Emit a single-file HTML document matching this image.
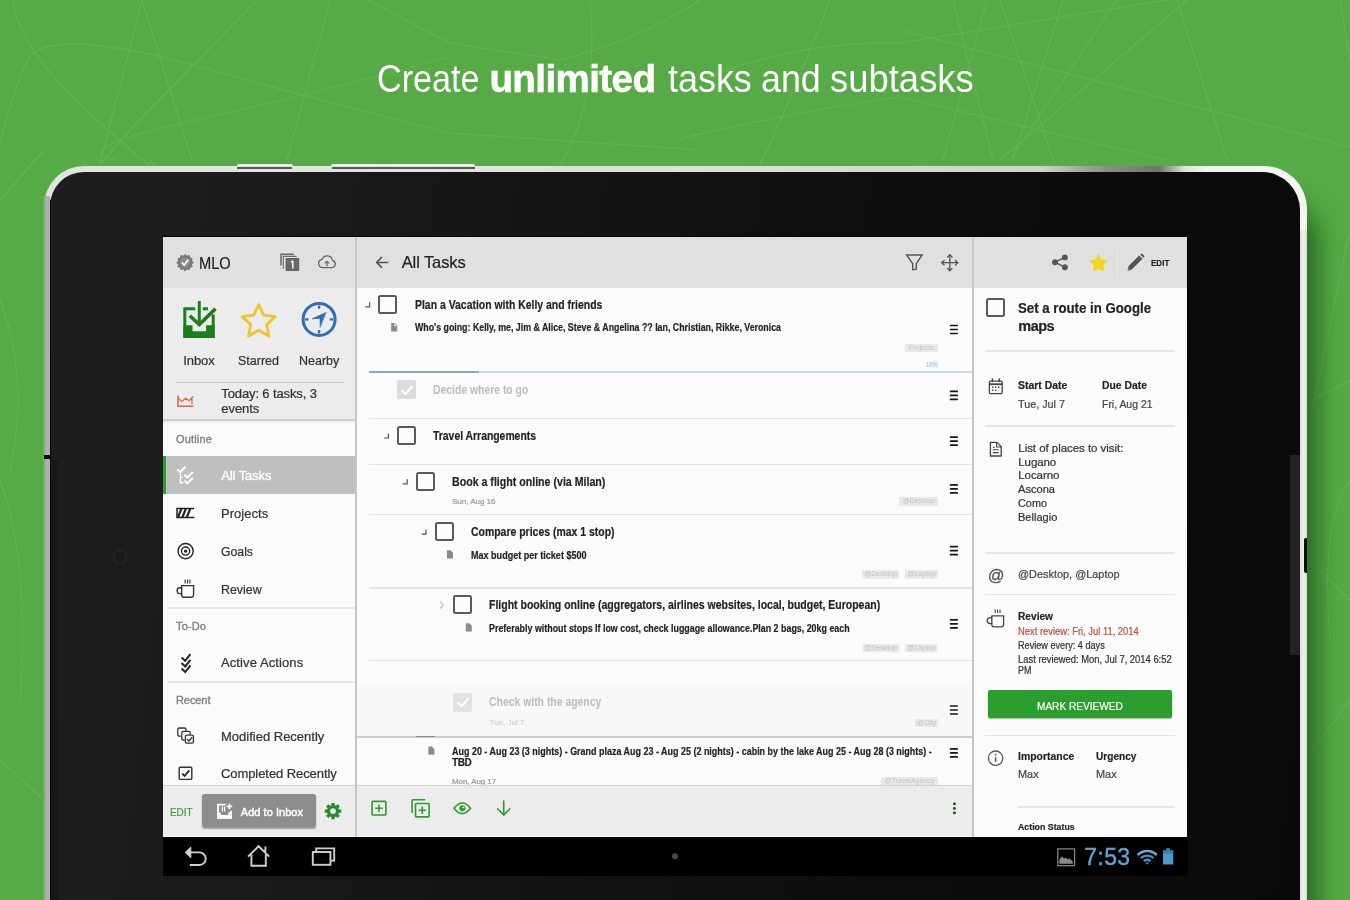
<!DOCTYPE html>
<html><head><meta charset="utf-8"><title>MLO</title>
<style>
*{box-sizing:border-box;margin:0;padding:0}
html,body{width:1350px;height:900px;overflow:hidden}
body{background:#56ab46;font-family:"Liberation Sans",sans-serif;position:relative;color:#222}
.t{position:absolute;white-space:pre;display:block;transform:translateZ(0)}
.b{position:absolute;display:block}
svg{position:absolute;overflow:visible}
#bgl{left:0;top:0;width:1350px;height:900px}
.cb{position:absolute;width:19px;height:19px;border:2px solid #5a5a5a;border-radius:2.5px;background:#fcfcfc}
.cbd{position:absolute;width:19px;height:19px;border-radius:2px;background:#dcdcdc}
.hd{position:absolute;height:1.6px;background:#e5e5e5}
.tag{position:absolute;height:8.4px;background:#e9e9e9;color:#c2c2c2;font-size:7px;line-height:8.4px;text-align:center;white-space:pre;overflow:hidden;filter:blur(.35px)}
</style></head><body>
<svg id="bgl" viewBox="0 0 1350 900" fill="none" stroke="#fff" stroke-opacity=".09" stroke-width="1.2">
<path d="M142 0L100 163M142 0L192 160M330 0L287 160M257 0L127 133L100 165M13 0Q18 50 100 123T150 160M0 143Q20 67 33 53Q67 30 200 67T450 133L700 150M450 57Q300 97 183 123T117 160M367 0L450 43L560 60M0 200L44 150M1177 0L1227 160M1187 0L1000 160M1117 0L1010 160M1063 0L1013 160M1000 0L1053 160M953 0L993 160M900 30L1350 147M900 43L1167 0M900 97L1167 160M987 0L943 160M700 80Q800 40 900 43M675 140Q800 110 900 97M560 60Q640 40 700 0M590 0Q600 100 560 165M760 165Q800 80 830 0M0 480Q30 560 20 700M0 760L44 800M1350 230L1310 420M1310 560L1350 600M1350 380L1312 400M1312 750L1350 700M0 300Q30 380 10 470M1350 480Q1320 520 1330 640M1340 0L1350 60"/>
</svg>

<!-- tablet frame -->
<div class="b" style="left:236.5px;top:164.3px;width:56px;height:3px;background:#f4f5f2;border-radius:2px 2px 0 0"></div>
<div class="b" style="left:331px;top:164.3px;width:144px;height:3px;background:#f4f5f2;border-radius:2px 2px 0 0"></div>
<div class="b" style="left:800px;top:190px;width:504px;height:800px;border-radius:0 43px 0 0;box-shadow:14px 10px 26px rgba(10,55,5,.6)"></div>
<div class="b" id="fo" style="left:44px;top:165.5px;width:1263px;height:800px;border-radius:40px 43px 0 0;background:linear-gradient(90deg,#e2e4e0 0,#dfe1dd 50%,#d0d2ce 79%,#8e8f8d 84%,#727371 88.3%,#dfe0dd 90.3%,#f2f3f0 92%,#f4f5f2 100%)"></div>
<div class="b" style="left:43px;top:196px;width:7.300px;height:740px;background:linear-gradient(90deg,#56ab46 0,#7fb276 18%,#a9aea8 40%,#b2b2b2 60%,#adadad 100%)"></div>
<div class="b" style="left:1299px;top:230px;width:8px;height:700px;background:linear-gradient(90deg,#d9dad6,#f0f1ee 60%,#d8d9d5)"></div>
<div class="b" style="left:237px;top:166.600px;width:55px;height:2.200px;background:rgba(55,55,55,.8)"></div>
<div class="b" style="left:331.5px;top:166.600px;width:143px;height:2.200px;background:rgba(55,55,55,.8)"></div>
<div class="b" id="fi" style="left:50px;top:171.5px;width:1250px;height:800px;border-radius:34px 38px 0 0;background:linear-gradient(97deg,#1e1e1e 0,#1c1c1c 14%,#151515 36%,#0f0f0f 58%,#0b0b0b 85%,#0a0a0a 100%)"></div>
<div class="b" style="left:50px;top:200px;width:1.200px;height:740px;background:#080808"></div>
<div class="b" style="left:43.800px;top:455px;width:6.5px;height:4.200px;background:#0a0a0a"></div>
<div class="b" style="left:50px;top:460px;width:8px;height:470px;background:rgba(0,0,0,.18)"></div>
<div class="b" style="left:1290px;top:455px;width:9.5px;height:200px;background:#222"></div>
<div class="b" style="left:1303.5px;top:538px;width:3.5px;height:35px;background:#0a0a0a;border-radius:2px 0 0 2px"></div>
<div class="b" style="left:112px;top:548.5px;width:16px;height:16px;border-radius:50%;border:3px solid #222;background:#1a1a1a"></div>

<!-- screen -->
<div class="b" style="left:162.5px;top:235.5px;width:1025px;height:640px;background:#000"></div>
<div class="b" style="left:163px;top:237px;width:1024px;height:600px;background:#fbfbfb"></div>
<!-- headers -->
<div class="b" style="left:163px;top:237px;width:1024px;height:51px;background:#e0e0e0"></div>
<!-- left panel -->
<div class="b" style="left:163px;top:288px;width:192px;height:132px;background:#ececec"></div>
<div class="b" style="left:163px;top:419.3px;width:192px;height:2px;background:#cfcfcf"></div>
<div class="b" style="left:163px;top:421.3px;width:192px;height:2px;background:linear-gradient(#e6e6e6,#fbfbfb)"></div>
<div class="b" style="left:176px;top:381.5px;width:168px;height:1.5px;background:#c6c6c6"></div>
<div class="b" style="left:163px;top:456px;width:192px;height:37.6px;background:#bfbfbf"></div>
<div class="b" style="left:163px;top:456px;width:3.4px;height:37.6px;background:#2e9b2e"></div>
<div class="b" style="left:168px;top:606.8px;width:187px;height:2px;background:#e6e6e6"></div>
<div class="b" style="left:168px;top:680.8px;width:187px;height:2px;background:#e6e6e6"></div>
<!-- middle rows -->
<div class="b" style="left:368.5px;top:371.3px;width:603px;height:1.6px;background:#c9dbe6"></div>
<div class="b" style="left:368.5px;top:371.3px;width:110px;height:1.6px;background:#86aac2"></div>
<div class="hd" style="left:368.5px;top:417.6px;width:603px"></div>
<div class="hd" style="left:368.5px;top:463.6px;width:603px"></div>
<div class="hd" style="left:368.5px;top:513.7px;width:603px"></div>
<div class="hd" style="left:368.5px;top:587px;width:603px"></div>
<div class="hd" style="left:368.5px;top:659.8px;width:603px"></div>
<div class="b" style="left:357px;top:680px;width:615px;height:56.500px;background:linear-gradient(#fbfbfb 0,#f8f8f8 12%,#f8f8f8 100%)"></div>
<div class="b" style="left:357px;top:736.2px;width:615px;height:2.2px;background:#cdcdcd"></div>
<div class="b" style="left:416px;top:735.6px;width:19px;height:1.6px;background:#8a8a8a"></div>
<div class="cb" style="left:378.3px;top:295px"></div>
<div class="cb" style="left:986px;top:298.2px"></div>
<div class="cbd" style="left:397.2px;top:380.3px"></div>
<div class="cb" style="left:397.2px;top:426px"></div>
<div class="cb" style="left:416px;top:471.8px"></div>
<div class="cb" style="left:434.6px;top:522.3px"></div>
<div class="cb" style="left:453.4px;top:595.3px"></div>
<div class="cbd" style="left:453.4px;top:692.6px;background:#e2e2e2"></div>
<div class="hd" style="left:984.6px;top:350.3px;width:190.4px"></div>
<div class="hd" style="left:984.6px;top:425.3px;width:190.4px"></div>
<div class="hd" style="left:984.6px;top:552.0px;width:190.4px"></div>
<div class="hd" style="left:984.6px;top:593.9px;width:190.4px"></div>
<div class="hd" style="left:984.6px;top:734.9px;width:190.4px"></div>
<div class="hd" style="left:1017.5px;top:806px;width:157.5px"></div>
<div class="b" style="left:987.9px;top:689.6px;width:184.4px;height:28.2px;background:#2b9e2f;border-radius:2px;box-shadow:0 1px 1.5px rgba(0,0,0,.3)"></div>
<div class="tag" style="left:905px;top:343.6px;width:32.5px">Projects</div>
<div class="tag" style="left:899.4px;top:497.2px;width:38.9px">@Desktop</div>
<div class="tag" style="left:861.7px;top:570.4px;width:37.7px">@Desktop</div>
<div class="tag" style="left:905px;top:570.4px;width:33.3px">@Laptop</div>
<div class="tag" style="left:861.7px;top:643.8px;width:37.7px">@Desktop</div>
<div class="tag" style="left:905px;top:643.8px;width:33.3px">@Laptop</div>
<div class="tag" style="left:915px;top:718.9px;width:23.3px">@City</div>
<div class="tag" style="left:880.6px;top:777px;width:57.7px">@TravelAgency</div>
<span class="t" style="left:987.7px;top:565.3px;font-size:16.5px;line-height:20px;color:#555;-webkit-text-stroke:.3px #555">@</span>
<svg style="left:0;top:0;width:1350px;height:900px" viewBox="0 0 1350 900" fill="none" stroke-linecap="round" stroke-linejoin="round">
<!-- logo badge -->
<g fill="#787878" stroke="none"><circle cx="185.1" cy="262.6" r="7.2"/><circle cx="192.20" cy="262.60" r="1.35"/><circle cx="191.25" cy="266.15" r="1.35"/><circle cx="188.65" cy="268.75" r="1.35"/><circle cx="185.10" cy="269.70" r="1.35"/><circle cx="181.55" cy="268.75" r="1.35"/><circle cx="178.95" cy="266.15" r="1.35"/><circle cx="178.00" cy="262.60" r="1.35"/><circle cx="178.95" cy="259.05" r="1.35"/><circle cx="181.55" cy="256.45" r="1.35"/><circle cx="185.10" cy="255.50" r="1.35"/><circle cx="188.65" cy="256.45" r="1.35"/><circle cx="191.25" cy="259.05" r="1.35"/></g>
<circle cx="185.1" cy="262.6" r="5" fill="#8c8c8c"/>
<path d="M182.3 262.9l1.9 2.3l3.7-5.3" stroke="#fff" stroke-width="1.7"/>
<!-- copy icon with 1 -->
<path d="M281 265.5v-11.3h12.8" stroke="#666" stroke-width="1.5" stroke-linecap="butt" stroke-linejoin="miter"/>
<path d="M283.300 269v-12.600h13.400" stroke="#6a6a6a" stroke-width="1.100" stroke-linecap="butt" stroke-linejoin="miter"/>
<rect x="285.6" y="258" width="13.6" height="13" fill="#666"/>
<path d="M290.8 262.2l2-1.2v7.4" stroke="#fff" stroke-width="1.4" stroke-linecap="butt"/>
<!-- cloud -->
<path d="M322.3 267.6h9.6a3.6 3.6 0 0 0 .6-7.1a5.4 5.4 0 0 0-10.4-1.2a4.2 4.2 0 0 0 .2 8.3z" stroke="#666" stroke-width="1.3"/>
<path d="M327 266v-4.5m-1.9 1.7l1.9-1.9l1.9 1.9" stroke="#666" stroke-width="1.2"/>
<!-- inbox icon -->
<g stroke="#1e7e1e" fill="none" stroke-linecap="butt" stroke-linejoin="miter">
<path d="M195.2 308.8h-10.4v27.6h28.4v-22" stroke-width="3"/>
<path d="M202.800 308.8h5.200" stroke-width="3"/>
<path d="M183.3 325.2h9.2v6h13.6v-6h8.6v12.6h-31.4z" fill="#1e7e1e" stroke="none"/>
<path d="M199.3 301v22" stroke-width="3"/>
<path d="M189.800 315.800l9.500 8.800l16.200-15.800" stroke-width="3.600"/>
</g>
<!-- star outline -->
<path d="M258.7 304.6l4.9 10.6l11.6 1.4l-8.6 8l2.3 11.4l-10.2-5.7l-10.2 5.7l2.3-11.4l-8.6-8l11.6-1.4z" stroke="#f1c232" stroke-width="2.8" stroke-linejoin="round"/>
<!-- compass -->
<g stroke="#2f6db6">
<circle cx="319.1" cy="319.4" r="16" stroke-width="3"/>
<path d="M319.1 305.4v3.4M319.1 330v3.400M305.1 319.4h3.4M329.700 319.4h3.400" stroke-width="2.3" stroke-linecap="butt"/>
<path d="M325.800 312.600l-13.800 6.200l8 -.400l.200 8.600z" fill="#2f6db6" stroke-width=".6"/>
</g>
<!-- today icon -->
<path d="M178 395.5v10.8h15.6" stroke="#d2703d" stroke-width="1.6" stroke-linecap="butt" stroke-linejoin="miter"/>
<path d="M178.4 398.6l3.6 3l3.6-3.4l3.4 2.6l4-4.2m-1 2.2v5" stroke="#d2703d" stroke-width="1.3"/>
<!-- all tasks icon (white) -->
<g stroke="#fff" stroke-width="2" stroke-linecap="butt" stroke-linejoin="miter">
<path d="M177.4 469.4l2.8 2.8l5.2-5.4"/>
<path d="M184.4 474.8l2.8 2.8l5.6-5.6"/>
<path d="M184.4 480.6l2.8 2.8l5.6-5.6"/>
<path d="M180.4 473.4v9.4h3M180.4 477.4h2.6" stroke-width="1.4"/>
</g>
<!-- projects icon -->
<g stroke="#222" stroke-linecap="butt">
<path d="M194 508.6h-17v8.8h17.4" stroke-width="1.5" stroke-linejoin="miter"/>
<path d="M181.4 508.6l-3.4 8.8M185.8 508.6l-3.4 8.8M190.2 508.6l-3.4 8.8" stroke-width="2.2"/>
</g>
<!-- goals icon -->
<g stroke="#222"><circle cx="185.6" cy="551.1" r="7.6" stroke-width="1.4"/><circle cx="185.6" cy="551.1" r="4.1" stroke-width="1.3"/><circle cx="185.6" cy="551.1" r="1.7" fill="#222" stroke="none"/></g>
<!-- review cup -->
<g stroke="#333" stroke-width="1.4">
<path d="M181.6 585.6h12v9.2a2.4 2.4 0 0 1-2.4 2.4h-7.2a2.4 2.4 0 0 1-2.4-2.4z"/>
<path d="M181.6 587.8h-1.6a2.9 2.9 0 0 0 0 5.8h1.6"/>
<path d="M185.2 579.6v3.8M187.6 579.6v3.8M190 579.6v3.8" stroke-width="1.1" stroke-linecap="butt"/>
</g>
<!-- active actions -->
<g stroke="#222" stroke-width="2" stroke-linecap="butt" stroke-linejoin="miter">
<path d="M181.6 657.4l3.6 3.4l5.2-6.6"/><path d="M181.6 663l3.6 3.4l5.2-6.6"/><path d="M181.6 668.6l3.6 3.4l5.2-6.6"/>
</g>
<!-- modified recently -->
<g stroke="#333" stroke-width="1.3">
<path d="M180.2 736.2h-1a1.4 1.4 0 0 1-1.4-1.4v-5.4a1.4 1.4 0 0 1 1.4-1.4h5.4a1.4 1.4 0 0 1 1.4 1.4v1"/>
<path d="M184.2 740h-1a1.4 1.4 0 0 1-1.4-1.4v-5.8a1.4 1.4 0 0 1 1.4-1.4h5.6a1.4 1.4 0 0 1 1.4 1.4v1.2"/>
<rect x="185.4" y="735.2" width="8" height="8" rx="1.4"/>
<path d="M187.4 739.4l1.6 1.6l2.8-3.4" stroke-width="1.4"/>
</g>
<!-- completed recently -->
<rect x="179.2" y="767.2" width="12.6" height="12.2" rx="1" stroke="#333" stroke-width="1.4"/>
<path d="M182.2 773.6l2.4 2.4l4.6-5.6" stroke="#222" stroke-width="1.8" stroke-linecap="butt" stroke-linejoin="miter"/>

<!-- MIDDLE header -->
<path d="M387.8 262.4h-11m4.8-5l-5 5l5 5" stroke="#555" stroke-width="1.5"/>
<path d="M906.6 255h15.6l-5.9 8.6v5.6l-3.6.4v-6z" stroke="#555" stroke-width="1.4" stroke-linejoin="miter"/>
<g stroke="#555" stroke-width="1.3"><path d="M942 262.7h15.6M949.8 254.8v15.8"/><path d="M947.6 257l2.2-2.4l2.2 2.4M947.6 268.4l2.2 2.4l2.2-2.4M944.2 260.5l-2.4 2.2l2.4 2.2M955.4 260.5l2.4 2.2l-2.4 2.2"/></g>
<!-- collapse marks -->
<g stroke="#555" stroke-width="1.2" stroke-linecap="butt" stroke-linejoin="miter">
<path d="M369.6 302.2v4.6h-4.4"/><path d="M388.4 433.4v4.6h-4.4"/><path d="M407.2 479.2v4.6h-4.4"/><path d="M426 529.6v4.6h-4.4"/>
</g>
<path d="M440.6 602l2.8 3l-2.8 3" stroke="#bdbdbd" stroke-width="1.2"/>
<!-- checks in done boxes -->
<path d="M401.4 390l4 4l7-8" stroke="#fff" stroke-width="2" stroke-linecap="butt" stroke-linejoin="miter"/>
<path d="M457.6 702.3l4 4l7-8" stroke="#fff" stroke-width="2" stroke-linecap="butt" stroke-linejoin="miter"/>
<!-- note icons -->
<g fill="#8a8a8a" stroke="none">
<path id="ni" d="M391.2 323h3.4l2.6 2.6v5.8h-6zM394.2 323.4v2.8h2.6" />
<path d="M447 550.2h3.4l2.6 2.6v5.8h-6z"/>
<path d="M465.8 623.2h3.4l2.6 2.6v5.8h-6z"/>
<path d="M428.4 746.4h3.4l2.6 2.6v5.8h-6z"/>
</g>

<g stroke="#161616" stroke-width="1.7" stroke-linecap="round"><path d="M950.6 325.5h6.600M950.600 329.5h6.600M950.600 333.5h6.600"/><path d="M950.6 391.4h6.600M950.600 395.4h6.600M950.600 399.4h6.600"/><path d="M950.6 437.1h6.600M950.600 441.1h6.600M950.600 445.1h6.600"/><path d="M950.6 484.9h6.600M950.600 488.9h6.600M950.600 492.9h6.600"/><path d="M950.6 546.7h6.600M950.600 550.7h6.600M950.600 554.7h6.600"/><path d="M950.6 619.8h6.600M950.600 623.8h6.600M950.600 627.8h6.600"/><path d="M950.6 706.0h6.600M950.600 710.0h6.600M950.600 714.0h6.600"/><path d="M950.6 748.9h6.600M950.600 752.9h6.600M950.600 756.9h6.600"/></g>
<!-- RIGHT header -->
<g fill="#555" stroke="#555" stroke-width="1.5"><path d="M1055 262.2l9.9-4.8M1055 262.2l9.9 5.1" /><circle cx="1055" cy="262.2" r="2.2"/><circle cx="1064.9" cy="257.4" r="2.2"/><circle cx="1064.9" cy="267.3" r="2.2"/></g>
<path d="M1098.6 255.4l2.3 5l5.5.7l-4.1 3.8l1.1 5.4l-4.8-2.7l-4.8 2.7l1.1-5.4l-4.1-3.8l5.5-.7z" fill="#f2d61f" stroke="#f2d61f" stroke-width="1.8"/>
<path d="M1117.3 250v28" stroke="#ebebeb" stroke-width="1" stroke-linecap="butt"/>
<path d="M1128 270l.9-3.9l10.3-10.3l3 3l-10.3 10.3z" fill="#555" stroke="#555" stroke-width=".6"/>
<path d="M1140.3 254.7l.9-.9a.8.8 0 0 1 1.1 0l1.9 1.9a.8.8 0 0 1 0 1.1l-.9.9z" fill="#555" stroke="none"/>
<!-- calendar -->
<g stroke="#444" stroke-width="1.3">
<rect x="989.4" y="381.2" width="12.8" height="12.4" rx="1.2"/>
<path d="M989.4 384.2h12.8" stroke-width="1.8" stroke-linecap="butt"/>
<path d="M992.4 379v2.4M999.2 379v2.4" stroke-width="1.5"/>
<path d="M992 387.2h1.4M995 387.2h1.4M998 387.2h1.4M992 390.2h1.4M995 390.2h1.4" stroke-width="1.5" stroke-linecap="butt"/>
</g>
<!-- note (right) -->
<g stroke="#444" stroke-width="1.3">
<path d="M990.4 442.4h6.6l4.2 4.2v9.4h-10.8z"/><path d="M996.6 442.6v4.4h4.4" stroke-width="1.1"/>
<path d="M992.8 449.8h5.8M992.8 452.6h5.8M992.8 447.2h2" stroke-width="1.1" stroke-linecap="butt"/>
</g>
<!-- cup right -->
<g stroke="#444" stroke-width="1.3">
<path d="M991.8 615.8h11.8v8.6a2.4 2.4 0 0 1-2.4 2.4h-7a2.4 2.4 0 0 1-2.4-2.4z"/>
<path d="M991.8 617.6h-1.6a3 3 0 0 0 0 6h1.6"/>
<path d="M995.2 609.6v3.4M997.6 609.6v3.4M1000 609.6v3.4" stroke-width="1.1" stroke-linecap="butt"/>
</g>
<!-- info -->
<circle cx="995.6" cy="758.2" r="7.2" stroke="#555" stroke-width="1.3"/>
<path d="M995.6 757.2v4.6" stroke="#555" stroke-width="1.5" stroke-linecap="butt"/><circle cx="995.6" cy="754.6" r=".9" fill="#555"/>
</svg>

<span class="t" style="left:198.80px;top:254.64px;font-size:16.5px;line-height:16.5px;color:#222;-webkit-text-stroke:0.22px #222;transform:scaleX(0.8863);transform-origin:0 50%;">MLO</span>
<span class="t" style="left:183.30px;top:354.15px;font-size:13px;line-height:13px;color:#333;letter-spacing:-0.083px;-webkit-text-stroke:0.22px #333;">Inbox</span>
<span class="t" style="left:238.00px;top:354.15px;font-size:13px;line-height:13px;color:#333;-webkit-text-stroke:0.22px #333;transform:scaleX(0.9615);transform-origin:0 50%;">Starred</span>
<span class="t" style="left:299.00px;top:354.15px;font-size:13px;line-height:13px;color:#333;-webkit-text-stroke:0.22px #333;transform:scaleX(0.9613);transform-origin:0 50%;">Nearby</span>
<span class="t" style="left:221.30px;top:387.45px;font-size:13px;line-height:13px;color:#333;letter-spacing:-0.121px;-webkit-text-stroke:0.22px #333;">Today: 6 tasks, 3</span>
<span class="t" style="left:221.30px;top:402.05px;font-size:13px;line-height:13px;color:#333;letter-spacing:-0.052px;-webkit-text-stroke:0.22px #333;">events</span>
<span class="t" style="left:176.00px;top:434.13px;font-size:11px;line-height:11px;color:#808080;letter-spacing:0.163px;-webkit-text-stroke:0.35px #808080;">Outline</span>
<span class="t" style="left:221.30px;top:469.25px;font-size:13px;line-height:13px;color:#fff;letter-spacing:-0.118px;-webkit-text-stroke:0.3px #fff;">All Tasks</span>
<span class="t" style="left:221.00px;top:506.95px;font-size:13px;line-height:13px;color:#333;letter-spacing:0.029px;-webkit-text-stroke:0.22px #333;">Projects</span>
<span class="t" style="left:221.00px;top:544.65px;font-size:13px;line-height:13px;color:#333;-webkit-text-stroke:0.22px #333;transform:scaleX(0.9420);transform-origin:0 50%;">Goals</span>
<span class="t" style="left:221.00px;top:582.55px;font-size:13px;line-height:13px;color:#333;-webkit-text-stroke:0.22px #333;transform:scaleX(0.9525);transform-origin:0 50%;">Review</span>
<span class="t" style="left:176.00px;top:621.33px;font-size:11px;line-height:11px;color:#808080;letter-spacing:0.131px;-webkit-text-stroke:0.35px #808080;">To-Do</span>
<span class="t" style="left:221.00px;top:656.35px;font-size:13px;line-height:13px;color:#333;letter-spacing:0.097px;-webkit-text-stroke:0.22px #333;">Active Actions</span>
<span class="t" style="left:176.00px;top:694.63px;font-size:11px;line-height:11px;color:#808080;letter-spacing:-0.077px;-webkit-text-stroke:0.35px #808080;">Recent</span>
<span class="t" style="left:221.00px;top:729.65px;font-size:13px;line-height:13px;color:#333;-webkit-text-stroke:0.22px #333;">Modified Recently</span>
<span class="t" style="left:221.00px;top:767.45px;font-size:13px;line-height:13px;color:#333;letter-spacing:-0.076px;-webkit-text-stroke:0.22px #333;">Completed Recently</span>
<span class="t" style="left:401.70px;top:254.34px;font-size:16.5px;line-height:16.5px;color:#222;letter-spacing:-0.090px;-webkit-text-stroke:0.22px #222;">All Tasks</span>
<span class="t" style="left:415.00px;top:299.14px;font-size:12px;line-height:12px;color:#222;font-weight:bold;-webkit-text-stroke:0.18px #222;transform:scaleX(0.8696);transform-origin:0 50%;">Plan a Vacation with Kelly and friends</span>
<span class="t" style="left:415.00px;top:323.42px;font-size:10px;line-height:10px;color:#222;font-weight:bold;-webkit-text-stroke:0.18px #222;transform:scaleX(0.8810);transform-origin:0 50%;">Who's going: Kelly, me, Jim &amp; Alice, Steve &amp; Angelina ?? Ian, Christian, Rikke, Veronica</span>
<span class="t" style="left:433.00px;top:384.14px;font-size:12px;line-height:12px;color:#bcbcbc;font-weight:bold;transform:scaleX(0.8661);transform-origin:0 50%;">Decide where to go</span>
<span class="t" style="left:433.00px;top:430.14px;font-size:12px;line-height:12px;color:#222;font-weight:bold;-webkit-text-stroke:0.18px #222;transform:scaleX(0.8659);transform-origin:0 50%;">Travel Arrangements</span>
<span class="t" style="left:452.00px;top:475.94px;font-size:12px;line-height:12px;color:#222;font-weight:bold;-webkit-text-stroke:0.18px #222;transform:scaleX(0.8849);transform-origin:0 50%;">Book a flight online (via Milan)</span>
<span class="t" style="left:452.00px;top:497.89px;font-size:8px;line-height:8px;color:#999;letter-spacing:-0.018px;-webkit-text-stroke:0.22px #999;">Sun, Aug 16</span>
<span class="t" style="left:471.00px;top:526.34px;font-size:12px;line-height:12px;color:#222;font-weight:bold;-webkit-text-stroke:0.18px #222;transform:scaleX(0.8712);transform-origin:0 50%;">Compare prices (max 1 stop)</span>
<span class="t" style="left:471.00px;top:550.62px;font-size:10px;line-height:10px;color:#222;font-weight:bold;-webkit-text-stroke:0.18px #222;transform:scaleX(0.9036);transform-origin:0 50%;">Max budget per ticket $500</span>
<span class="t" style="left:489.40px;top:599.14px;font-size:12px;line-height:12px;color:#222;font-weight:bold;-webkit-text-stroke:0.18px #222;transform:scaleX(0.8744);transform-origin:0 50%;">Flight booking online (aggregators, airlines websites, local, budget, European)</span>
<span class="t" style="left:489.40px;top:623.51px;font-size:10px;line-height:10px;color:#222;font-weight:bold;-webkit-text-stroke:0.18px #222;transform:scaleX(0.8877);transform-origin:0 50%;">Preferably without stops If low cost, check luggage allowance.Plan 2 bags, 20kg each</span>
<span class="t" style="left:489.40px;top:696.34px;font-size:12px;line-height:12px;color:#bcbcbc;font-weight:bold;transform:scaleX(0.8680);transform-origin:0 50%;">Check with the agency</span>
<span class="t" style="left:489.40px;top:718.79px;font-size:8px;line-height:8px;color:#cfcfcf;letter-spacing:0.016px;-webkit-text-stroke:0.22px #cfcfcf;">Tue, Jul 7</span>
<span class="t" style="left:452.00px;top:746.91px;font-size:10px;line-height:10px;color:#222;font-weight:bold;-webkit-text-stroke:0.18px #222;transform:scaleX(0.8959);transform-origin:0 50%;">Aug 20 - Aug 23 (3 nights) - Grand plaza Aug 23 - Aug 25 (2 nights) - cabin by the lake Aug 25 - Aug 28 (3 nights) -</span>
<span class="t" style="left:452.00px;top:757.82px;font-size:10px;line-height:10px;color:#222;font-weight:bold;-webkit-text-stroke:0.18px #222;letter-spacing:-0.4px;">TBD</span>
<span class="t" style="left:452.00px;top:778.39px;font-size:8px;line-height:8px;color:#999;letter-spacing:-0.084px;-webkit-text-stroke:0.22px #999;">Mon, Aug 17</span>
<span class="t" style="left:925.70px;top:361.08px;font-size:7px;line-height:7px;color:#a9cbe0;-webkit-text-stroke:0.22px #a9cbe0;transform:scaleX(0.8419);transform-origin:0 50%;">16%</span>
<span class="t" style="left:1150.80px;top:258.26px;font-size:9.5px;line-height:9.5px;color:#222;font-weight:bold;-webkit-text-stroke:0.18px #222;transform:scaleX(0.8456);transform-origin:0 50%;">EDIT</span>
<span class="t" style="left:1018.30px;top:301.22px;font-size:14.5px;line-height:14.5px;color:#222;font-weight:bold;-webkit-text-stroke:0.18px #222;transform:scaleX(0.9120);transform-origin:0 50%;">Set a route in Google</span>
<span class="t" style="left:1018.30px;top:319.22px;font-size:14.5px;line-height:14.5px;color:#222;font-weight:bold;-webkit-text-stroke:0.18px #222;letter-spacing:-0.5px;">maps</span>
<span class="t" style="left:1018.30px;top:380.08px;font-size:11.5px;line-height:11.5px;color:#222;font-weight:bold;-webkit-text-stroke:0.18px #222;transform:scaleX(0.9093);transform-origin:0 50%;">Start Date</span>
<span class="t" style="left:1102.30px;top:380.08px;font-size:11.5px;line-height:11.5px;color:#222;font-weight:bold;-webkit-text-stroke:0.18px #222;transform:scaleX(0.9025);transform-origin:0 50%;">Due Date</span>
<span class="t" style="left:1018.30px;top:399.38px;font-size:11.5px;line-height:11.5px;color:#444;-webkit-text-stroke:0.22px #444;transform:scaleX(0.9385);transform-origin:0 50%;">Tue, Jul 7</span>
<span class="t" style="left:1102.30px;top:399.38px;font-size:11.5px;line-height:11.5px;color:#444;-webkit-text-stroke:0.22px #444;transform:scaleX(0.9079);transform-origin:0 50%;">Fri, Aug 21</span>
<span class="t" style="left:1018.30px;top:442.78px;font-size:11.5px;line-height:11.5px;color:#333;letter-spacing:-0.046px;-webkit-text-stroke:0.22px #333;">List of places to visit:</span>
<span class="t" style="left:1018.30px;top:456.58px;font-size:11.5px;line-height:11.5px;color:#333;letter-spacing:-0.096px;-webkit-text-stroke:0.22px #333;">Lugano</span>
<span class="t" style="left:1018.30px;top:470.38px;font-size:11.5px;line-height:11.5px;color:#333;letter-spacing:-0.080px;-webkit-text-stroke:0.22px #333;">Locarno</span>
<span class="t" style="left:1018.30px;top:484.18px;font-size:11.5px;line-height:11.5px;color:#333;-webkit-text-stroke:0.22px #333;transform:scaleX(0.9646);transform-origin:0 50%;">Ascona</span>
<span class="t" style="left:1018.30px;top:497.98px;font-size:11.5px;line-height:11.5px;color:#333;-webkit-text-stroke:0.22px #333;transform:scaleX(0.9450);transform-origin:0 50%;">Como</span>
<span class="t" style="left:1018.30px;top:511.68px;font-size:11.5px;line-height:11.5px;color:#333;-webkit-text-stroke:0.22px #333;transform:scaleX(0.9604);transform-origin:0 50%;">Bellagio</span>
<span class="t" style="left:1018.30px;top:569.28px;font-size:11.5px;line-height:11.5px;color:#444;-webkit-text-stroke:0.22px #444;transform:scaleX(0.9486);transform-origin:0 50%;">@Desktop, @Laptop</span>
<span class="t" style="left:1018.30px;top:611.48px;font-size:11.5px;line-height:11.5px;color:#222;font-weight:bold;-webkit-text-stroke:0.18px #222;transform:scaleX(0.8829);transform-origin:0 50%;">Review</span>
<span class="t" style="left:1018.30px;top:627.32px;font-size:10px;line-height:10px;color:#c8503c;-webkit-text-stroke:0.22px #c8503c;transform:scaleX(0.9374);transform-origin:0 50%;">Next review: Fri, Jul 11, 2014</span>
<span class="t" style="left:1018.30px;top:641.12px;font-size:10px;line-height:10px;color:#333;-webkit-text-stroke:0.22px #333;transform:scaleX(0.9122);transform-origin:0 50%;">Review every: 4 days</span>
<span class="t" style="left:1018.30px;top:654.72px;font-size:10px;line-height:10px;color:#333;-webkit-text-stroke:0.22px #333;transform:scaleX(0.9404);transform-origin:0 50%;">Last reviewed: Mon, Jul 7, 2014 6:52</span>
<span class="t" style="left:1018.30px;top:665.51px;font-size:10px;line-height:10px;color:#333;-webkit-text-stroke:0.22px #333;transform:scaleX(0.8867);transform-origin:0 50%;">PM</span>
<span class="t" style="left:1036.60px;top:701.08px;font-size:11.5px;line-height:11.5px;color:#fff;-webkit-text-stroke:0.22px #fff;transform:scaleX(0.8766);transform-origin:0 50%;">MARK REVIEWED</span>
<span class="t" style="left:1018.30px;top:751.48px;font-size:11.5px;line-height:11.5px;color:#222;font-weight:bold;-webkit-text-stroke:0.18px #222;transform:scaleX(0.9081);transform-origin:0 50%;">Importance</span>
<span class="t" style="left:1096.10px;top:751.48px;font-size:11.5px;line-height:11.5px;color:#222;font-weight:bold;-webkit-text-stroke:0.18px #222;transform:scaleX(0.8798);transform-origin:0 50%;">Urgency</span>
<span class="t" style="left:1018.30px;top:768.78px;font-size:11.5px;line-height:11.5px;color:#444;-webkit-text-stroke:0.22px #444;transform:scaleX(0.9524);transform-origin:0 50%;">Max</span>
<span class="t" style="left:1096.10px;top:768.78px;font-size:11.5px;line-height:11.5px;color:#444;-webkit-text-stroke:0.22px #444;transform:scaleX(0.9524);transform-origin:0 50%;">Max</span>
<span class="t" style="left:1018.30px;top:822.36px;font-size:9.5px;line-height:9.5px;color:#222;font-weight:bold;-webkit-text-stroke:0.18px #222;transform:scaleX(0.9260);transform-origin:0 50%;">Action Status</span>
<span class="t" style="left:1084.30px;top:845.96px;font-size:23px;line-height:23px;color:#5fa4d3;letter-spacing:0.359px;-webkit-text-stroke:0.4px #5fa4d3;">7:53</span>
<span class="t" style="left:377.10px;top:59.79px;font-size:38.5px;line-height:38.5px;color:#fff;transform:scaleX(0.8878);transform-origin:0 50%;">Create</span>
<span class="t" style="left:489.40px;top:59.79px;font-size:38.5px;line-height:38.5px;color:#fff;font-weight:bold;letter-spacing:-0.568px;-webkit-text-stroke:0.6px #fff;">unlimited</span>
<span class="t" style="left:667.50px;top:59.79px;font-size:38.5px;line-height:38.5px;color:#fff;transform:scaleX(0.9326);transform-origin:0 50%;">tasks</span>
<span class="t" style="left:760.70px;top:59.79px;font-size:38.5px;line-height:38.5px;color:#fff;transform:scaleX(0.9307);transform-origin:0 50%;">and</span>
<span class="t" style="left:830.00px;top:59.79px;font-size:38.5px;line-height:38.5px;color:#fff;transform:scaleX(0.9464);transform-origin:0 50%;">subtasks</span>
<!-- bottom bars -->
<div class="b" style="left:163px;top:785px;width:809px;height:52px;background:#ececec;border-top:1.3px solid #d2d2d2;border-bottom:1.600px solid #f8f8f8"></div>
<!-- vertical dividers -->
<div class="b" style="left:355px;top:237px;width:2px;height:600px;background:#c6c6c6"></div>
<div class="b" style="left:972px;top:237px;width:2px;height:600px;background:#c6c6c6"></div>
<!-- add to inbox button -->
<div class="b" style="left:202.3px;top:794.4px;width:113.8px;height:32.4px;background:#8d8d8d;border-radius:3px;box-shadow:0 1.2px 1.5px rgba(0,0,0,.35)"></div>
<!-- mark reviewed button -->
<svg style="left:0;top:0;width:1350px;height:900px" viewBox="0 0 1350 900" fill="none" stroke-linecap="round" stroke-linejoin="round">
<!-- add to inbox icon -->
<g stroke="#fff" fill="none" stroke-linecap="butt" stroke-linejoin="miter">
<path d="M225.6 804.6h-7.6v13.2h13v-7" stroke-width="1.8"/>
<path d="M217.2 812.6h3.6v2.4h7.4v-2.4h3.6v6h-14.6z" fill="#fff" stroke="none"/>
<path d="M222.4 806.4v5M224.6 806.4v5" stroke-width="1.2"/>
<path d="M229.4 803.6v5.6M226.6 806.4h5.6" stroke-width="1.6"/>
</g>
<!-- gear -->
<g transform="translate(333 811.1)" stroke="#258a2a">
<circle r="4.5" stroke-width="3.2"/>
<g stroke-width="3.3" stroke-linecap="butt"><path d="M0-8.2v3M0 8.2v-3M-8.2 0h3M8.2 0h-3M-5.8-5.8l2.1 2.1M5.8 5.8l-2.1-2.1M-5.8 5.8l2.1-2.1M5.8-5.8l-2.1 2.1"/></g>
</g>
<!-- bottom bar icons (middle) -->
<g stroke="#2e9b2e" stroke-width="1.6">
<rect x="372.1" y="801.4" width="13.8" height="13.6" rx=".8"/><path d="M379 804.4v7.6M375.2 808.2h7.6" stroke-linecap="butt"/>
<path d="M412.1 812.2v-11.6a.8.8 0 0 1 .8-.8h11.6" />
<rect x="415.5" y="803.5" width="13.6" height="13.4" rx=".8"/><path d="M422.3 806.4v7.6M418.5 810.2h7.6" stroke-linecap="butt"/>
<path d="M454 808.3q8.300-10.600 16.600 0q-8.300 10.600-16.600 0z" stroke-width="1.7"/>
<circle cx="462.3" cy="808.3" r="2.7" fill="#2e9b2e" stroke-width=".8"/>
<path d="M503.7 801.2v13.4M497.7 809l6 6l6-6" stroke-width="1.7"/>
</g>
<circle cx="463.2" cy="807.3" r=".9" fill="#dff0df"/>
<g fill="#1f4d1f"><circle cx="954.4" cy="803.9" r="1.45"/><circle cx="954.4" cy="808.4" r="1.45"/><circle cx="954.4" cy="812.9" r="1.45"/></g>
<!-- nav bar -->
<g stroke="#cfcfcf" stroke-width="1.9" stroke-linecap="butt" stroke-linejoin="miter">
<path d="M188 852.4h11.400a6.200 6.200 0 0 1 0 12.600h-9.600"/>
<path d="M190.800 847l-5.600 5.400l5.600 5.400z" fill="#cfcfcf" stroke-width="1" stroke-linejoin="round"/>
<path d="M248 856.600l10.600-10.400l10.600 10.400M251.400 854.400v11.400h14.400v-11.400M265.400 852v-5.400" />
<path d="M316.200 851.400v-3h18v12.200h-3.200"/><rect x="312.800" y="852" width="17.600" height="12.800"/>
</g>
<circle cx="675" cy="856.3" r="3" fill="#484848"/>
<!-- status icons -->
<g stroke="#8c8c8c" stroke-width="1.2" stroke-linecap="butt" stroke-linejoin="miter"><rect x="1057.800" y="848.900" width="16.800" height="16.800"/></g>
<path d="M1059.400 863.800v-4l2.600-3.600l2 2.600l1.600-1.400l2 2l1.600-1.200l3.600 3.200v2.400z" fill="#8c8c8c"/>
<g fill="none" stroke-linecap="butt"><path d="M1137.700 855a13.400 13.400 0 0 1 19 0" stroke="#6fa9cf" stroke-width="2.600"/><path d="M1140.900 858.200a8.900 8.900 0 0 1 12.600 0" stroke="#3f93cc" stroke-width="2.400"/><path d="M1143.900 861.200a4.600 4.600 0 0 1 6.600 0" stroke="#3f93cc" stroke-width="2.400"/></g>
<path d="M1145.300 862.600h3.800l-1.900 2.200z" fill="#3f93cc"/>
<path d="M1163 850.600h3.400v-2h3.400v2h3.400v14h-10.200z" fill="#4a9bcf"/><path d="M1163 850.600h3.400v-2h3.400v2h3.400v3h-10.200z" fill="#3b7ea9"/>
</svg>

<span class="t" style="left:170.40px;top:806.53px;font-size:11px;line-height:11px;color:#3a9e3a;-webkit-text-stroke:0.22px #3a9e3a;transform:scaleX(0.9017);transform-origin:0 50%;">EDIT</span>
<span class="t" style="left:240.80px;top:806.53px;font-size:11px;line-height:11px;color:#fff;letter-spacing:0.035px;-webkit-text-stroke:0.45px #fff;">Add to Inbox</span>

</body></html>
